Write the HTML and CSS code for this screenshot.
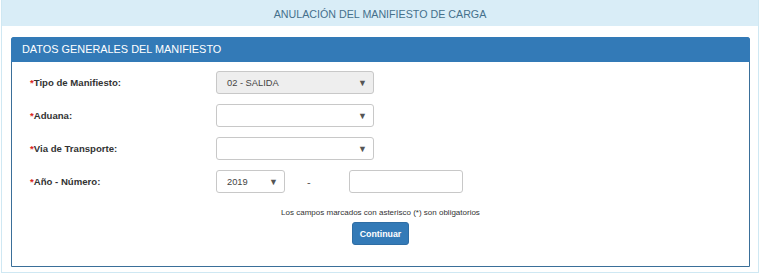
FILE: index.html
```html
<!DOCTYPE html>
<html>
<head>
<meta charset="utf-8">
<link rel="stylesheet" href="styles.css">
</head>
<body>
<div class="outer">
  <div class="outer-head">ANULACIÓN DEL MANIFIESTO DE CARGA</div>
  <div class="outer-body">
    <div class="panel">
      <div class="panel-head">DATOS GENERALES DEL MANIFIESTO</div>
      <div class="panel-body">
        <div class="row">
          <label class="lbl"><span class="req">*</span>Tipo de Manifiesto:</label>
          <div class="sel sel-wide disabled"><span>02 - SALIDA</span><span class="arr">▼</span></div>
        </div>
        <div class="row">
          <label class="lbl"><span class="req">*</span>Aduana:</label>
          <div class="sel sel-wide"><span></span><span class="arr">▼</span></div>
        </div>
        <div class="row">
          <label class="lbl"><span class="req">*</span>Via de Transporte:</label>
          <div class="sel sel-wide"><span></span><span class="arr">▼</span></div>
        </div>
        <div class="row">
          <label class="lbl"><span class="req">*</span>Año - Número:</label>
          <div class="sel sel-year"><span>2019</span><span class="arr">▼</span></div>
          <span class="dash">-</span>
          <div class="inp"></div>
        </div>
        <p class="note">Los campos marcados con asterisco (*) son obligatorios</p>
        <div class="actions"><button class="btn">Continuar</button></div>
      </div>
    </div>
  </div>
</div>
</body>
</html>
```
FILE: styles.css
```css
html, body { margin: 0; padding: 0; background: #fff; }
body { font-family: "Liberation Sans", Arial, sans-serif; color: #333; }
.outer {
  margin-left: 1px;
  width: 756px;
  border: 1px solid #cfe8f3;
  border-top: 0;
  height: 272px;
}
.outer-head {
  background: #d9edf7;
  height: 26px;
  line-height: 28px;
  text-align: center;
  font-size: 10.7px;
  color: #45708c;
}
.outer-body { padding: 11px 8px 0 9px; }
.panel {
  border: 1px solid #3a6f99;
  border-radius: 3px 3px 0 0;
  height: 228px;
}
.panel-head {
  background: #337ab7;
  color: #fff;
  height: 25px;
  line-height: 25px;
  font-size: 10.9px;
  padding-left: 11px;
  margin: -1px -1px 0 -1px;
  border-radius: 3px 3px 0 0;
}
.panel-body { padding-top: 4px; }
.row {
  display: flex;
  align-items: center;
  height: 33px;
  padding-left: 18px;
}
.lbl {
  width: 186px;
  font-size: 9.6px;
  font-weight: bold;
  color: #333;
}
.req { color: #d9261c; }
.sel {
  box-sizing: border-box;
  height: 23px;
  border: 1px solid #c8c8c8;
  border-radius: 3px;
  background: #fff;
  display: flex;
  align-items: center;
  justify-content: space-between;
  padding: 0 6px 0 10px;
  font-size: 9.3px;
  color: #444;
}
.sel-wide { width: 158px; }
.sel-year { width: 69px; }
.disabled { background: #eee; }
.arr { font-size: 9px; color: #555; }
.dash { width: 64px; text-align: left; padding-left: 22px; box-sizing: border-box; font-size: 11px; color: #555; }
.inp {
  box-sizing: border-box;
  width: 114px;
  height: 23px;
  border: 1px solid #c8c8c8;
  border-radius: 3px;
}
.note {
  margin: 10px 0 0 0;
  text-align: center;
  font-size: 8px;
  color: #333;
}
.actions { text-align: center; margin-top: 5px; }
.btn {
  background: #337ab7;
  border: 1px solid #2e6da4;
  border-radius: 3px;
  color: #fff;
  font-family: "Liberation Sans", Arial, sans-serif;
  font-size: 8.8px;
  font-weight: bold;
  height: 23px;
  width: 57px;
  padding: 0;
}
```
